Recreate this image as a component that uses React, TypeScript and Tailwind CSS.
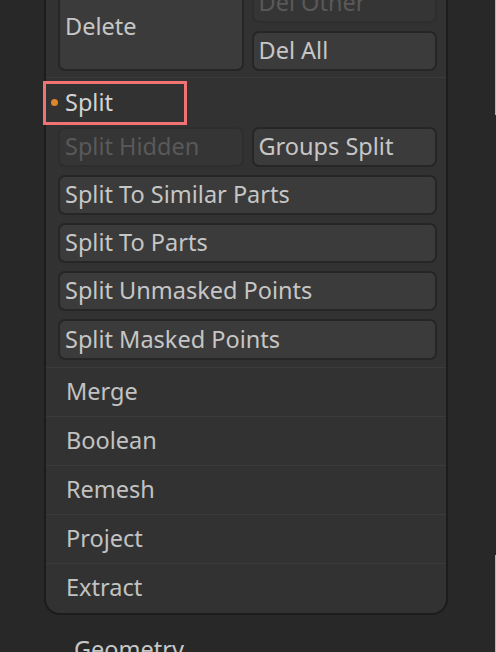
import React from "react";

const font = { fontFamily: '"Noto Sans", "Open Sans", sans-serif' };

function Btn({ label, disabled, className = "" }: { label: string; disabled?: boolean; className?: string }) {
  return (
    <div
      className={`flex items-center px-[5px] rounded-[7px] border-2 text-[23.5px] leading-none whitespace-nowrap ${
        disabled ? "bg-[#353535] text-[#595959] border-[#2e2e2e]" : "bg-[#3b3b3b] text-[#c6c6c6] border-[#262626]"
      } ${className}`}
    >
      {label}
    </div>
  );
}

const ROWS = ["Merge", "Boolean", "Remesh", "Project", "Extract"];

export default function App() {
  return (
    <div className="relative w-[496px] h-[652px] overflow-hidden bg-[#282828]" style={font}>
      <div className="ml-[44px] w-[404px] -mt-[31px] bg-[#323232] border-2 border-t-0 border-[#1c1c1c] rounded-b-[16px]">
        {/* delete group */}
        <div className="pl-3 pr-[9px] pt-[14px] pb-[6px] border-b border-[#3b3b3b]">
          <div className="grid grid-cols-2 gap-2">
            <Btn label="Delete" className="row-span-2 h-[88px]" />
            <Btn label="Del Other" disabled className="h-[40px]" />
            <Btn label="Del All" className="h-[40px]" />
          </div>
        </div>

        {/* split header */}
        <div className="h-[49px] flex items-center pl-[5px] gap-[7px] text-[23.5px] text-[#d2d2d2]">
          <span className="w-[7px] h-[7px] rounded-full bg-[#e0862a]" />
          <span>Split</span>
        </div>

        <div className="pl-3 pr-[9px] pb-[7px] border-b border-[#3b3b3b] flex flex-col gap-2">
          <div className="grid grid-cols-2 gap-2">
            <Btn label="Split Hidden" disabled className="h-[40px]" />
            <Btn label="Groups Split" className="h-[40px]" />
          </div>
          <Btn label="Split To Similar Parts" className="h-[40px]" />
          <Btn label="Split To Parts" className="h-[40px]" />
          <Btn label="Split Unmasked Points" className="h-[40px]" />
          <Btn label="Split Masked Points" className="h-[41px]" />
        </div>

        {ROWS.map((r, i) => (
          <div
            key={r}
            className={`h-[49px] flex items-center pl-[20px] text-[23.5px] text-[#c2c2c2] ${
              i < ROWS.length - 1 ? "border-b border-[#3b3b3b]" : "pb-[2px]"
            }`}
          >
            {r}
          </div>
        ))}
      </div>

      <div className="ml-[74px] mt-[23px] text-[23.5px] text-[#c8c8c8] leading-none">Geometry</div>

      {/* annotation highlight */}
      <div className="absolute left-[43px] top-[81px] w-[144px] h-[44px] border-[3px] border-[#f07272]" />

      {/* right edge strip */}
      <div className="absolute right-0 top-0 w-px h-[115px] bg-[#b4b0c6]" />
      <div className="absolute right-0 top-[555px] w-px h-[97px] bg-[#b4b0c6]" />
    </div>
  );
}
